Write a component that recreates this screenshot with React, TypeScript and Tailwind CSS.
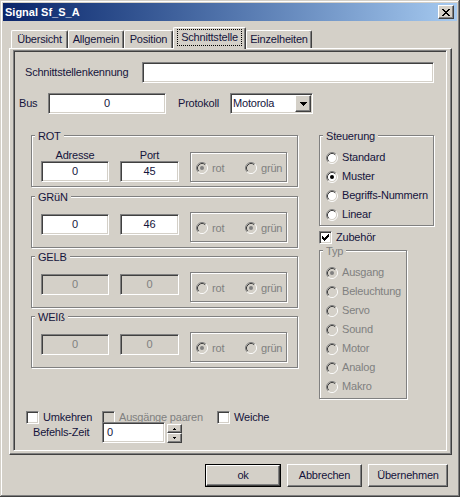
import React from "react";

const sunken =
  "border border-t-[#808080] border-l-[#808080] border-r-white border-b-white shadow-[inset_1px_1px_0_#404040,inset_-1px_-1px_0_#d4d0c8]";
const raised =
  "border border-t-white border-l-white border-r-[#404040] border-b-[#404040] shadow-[inset_-1px_-1px_0_#808080]";
const etched =
  "border border-[#808080] shadow-[inset_1px_1px_0_#ffffff,1px_1px_0_#ffffff]";

function Radio({ checked = false, disabled = false }: { checked?: boolean; disabled?: boolean }) {
  return (
    <svg width="12" height="12" viewBox="0 0 12 12" className="shrink-0">
      <circle cx="6" cy="6" r="4.5" fill={disabled ? "#d4d0c8" : "#ffffff"} />
      <path d="M2.11 9.89A5.5 5.5 0 0 1 9.89 2.11" stroke="#808080" fill="none" />
      <path d="M9.89 2.11A5.5 5.5 0 0 1 2.11 9.89" stroke="#ffffff" fill="none" />
      <path d="M2.82 9.18A4.5 4.5 0 0 1 9.18 2.82" stroke="#404040" fill="none" />
      <path d="M9.18 2.82A4.5 4.5 0 0 1 2.82 9.18" stroke="#d4d0c8" fill="none" />
      {checked && <circle cx="6" cy="6" r="2" fill={disabled ? "#808080" : "#000000"} />}
    </svg>
  );
}

function Check({ checked = false, disabled = false }: { checked?: boolean; disabled?: boolean }) {
  return (
    <span
      className={`${sunken} w-[13px] h-[13px] shrink-0 flex items-center justify-center ${
        disabled ? "bg-[#d4d0c8]" : "bg-white"
      }`}
    >
      {checked && (
        <svg width="7" height="7" viewBox="0 0 7 7" shapeRendering="crispEdges">
          <path
            d="M6 0h1v1H6zM5 1h2v1H5zM0 2h1v1H0zM4 2h3v1H4zM0 3h2v1H0zM3 3h3v1H3zM0 4h5v1H0zM1 5h3v1H1zM2 6h1v1H2z"
            fill="#000"
          />
        </svg>
      )}
    </span>
  );
}

function Edit({
  value = "",
  center = false,
  disabled = false,
  className = "",
}: {
  value?: string;
  center?: boolean;
  disabled?: boolean;
  className?: string;
}) {
  return (
    <div
      className={`${sunken} h-[21px] flex items-center ${
        disabled ? "bg-[#d4d0c8] text-[#808080]" : "bg-white"
      } ${center ? "justify-center" : "pl-[4px]"} ${className}`}
    >
      {value}
    </div>
  );
}

function Group({
  label,
  disabled = false,
  className = "",
  children,
}: {
  label: string;
  disabled?: boolean;
  className?: string;
  children?: React.ReactNode;
}) {
  return (
    <div className={`relative ${etched} ${className}`}>
      <span
        className={`absolute left-[3px] top-[-6px] px-[3px] h-[13px] bg-[#d4d0c8] ${
          disabled ? "text-[#808080]" : ""
        }`}
      >
        {label}
      </span>
      {children}
    </div>
  );
}

function RotGruen({ sel }: { sel: "rot" | "gruen" }) {
  return (
    <div className={`${etched} w-[97px] h-[30px] flex items-center pl-[5px] pt-[2px] text-[#808080]`}>
      <div className="w-[49px] flex items-center gap-[4px]">
        <Radio checked={sel === "rot"} disabled />
        <span>rot</span>
      </div>
      <div className="flex items-center gap-[4px]">
        <Radio checked={sel === "gruen"} disabled />
        <span>grün</span>
      </div>
    </div>
  );
}

function ColorGroup({
  label,
  adr,
  port,
  sel,
  disabled = false,
  labels = false,
  className = "",
}: {
  label: string;
  adr: string;
  port: string;
  sel: "rot" | "gruen";
  disabled?: boolean;
  labels?: boolean;
  className?: string;
}) {
  return (
    <Group label={label} className={`w-[267px] h-[52px] shrink-0 ${className}`}>
      <div className="flex items-start pl-[9px]">
        <div className={`flex flex-col items-center w-[68px] ${labels ? "mt-[13px]" : "mt-[17px]"}`}>
          {labels && <div className="h-[12px] leading-[12px]">Adresse</div>}
          <Edit className="w-[68px]" value={adr} center disabled={disabled} />
        </div>
        <div className={`ml-[11px] flex flex-col items-center w-[59px] ${labels ? "mt-[13px]" : "mt-[17px]"}`}>
          {labels && <div className="h-[12px] leading-[12px]">Port</div>}
          <Edit className="w-[59px]" value={port} center disabled={disabled} />
        </div>
        <div className={`ml-[11px] ${labels ? "mt-[16px]" : "mt-[15px]"}`}>
          <RotGruen sel={sel} />
        </div>
      </div>
    </Group>
  );
}

function Tab({ label, w }: { label: string; w: string }) {
  return (
    <div
      className={`${w} h-[18px] flex items-center justify-center border-l border-t border-white border-r border-r-[#404040] shadow-[inset_-1px_0_0_#808080] rounded-t-[2px]`}
    >
      {label}
    </div>
  );
}

function Button({ label, w, def = false }: { label: string; w: string; def?: boolean }) {
  if (def) {
    return (
      <div className={`${w} h-[23px] border border-black flex`}>
        <div className={`${raised} flex-1 flex items-center justify-center`}>{label}</div>
      </div>
    );
  }
  return <div className={`${raised} ${w} h-[23px] flex items-center justify-center`}>{label}</div>;
}

export default function App() {
  const steuerung = ["Standard", "Muster", "Begriffs-Nummern", "Linear"];
  const typ = ["Ausgang", "Beleuchtung", "Servo", "Sound", "Motor", "Analog", "Makro"];
  return (
    <div className="w-[460px] h-[497px] bg-[#d4d0c8] p-[3px] flex flex-col text-[11px] leading-[13px] tracking-[-0.2px] text-[#14143c] [font-family:'Liberation_Sans',Arial,sans-serif] shadow-[inset_-1px_-1px_0_#404040,inset_1px_1px_0_#d4d0c8,inset_-2px_-2px_0_#808080,inset_2px_2px_0_#ffffff] overflow-hidden">
      {/* Title bar */}
      <div className="h-[18px] shrink-0 flex items-center justify-between bg-linear-to-r from-[#0a246a] to-[#a6caf0] pl-[2px] pr-[3px]">
        <span className="text-white font-bold tracking-normal">Signal Sf_S_A</span>
        <div className={`${raised} w-[16px] h-[14px] flex items-center justify-center bg-[#d4d0c8]`}>
          <svg width="8" height="7" viewBox="0 0 8 7" shapeRendering="crispEdges">
            <path
              d="M0 0h2v1H0zM6 0h2v1H6zM1 1h2v1H1zM5 1h2v1H5zM2 2h4v1H2zM3 3h2v1H3zM2 4h4v1H2zM1 5h2v1H1zM5 5h2v1H5zM0 6h2v1H0zM6 6h2v1H6z"
              fill="#000"
            />
          </svg>
        </div>
      </div>

      {/* Tabs */}
      <div className="mt-[6px] h-[21px] shrink-0 flex items-end pl-[8px]">
        <Tab label="Übersicht" w="w-[57px]" />
        <Tab label="Allgemein" w="w-[56px]" />
        <Tab label="Position" w="w-[49px]" />
        <div className="relative z-10 w-[73px] h-[22px] mb-[-1px] flex items-start justify-center pt-[1px] bg-[#d4d0c8] border-l border-t border-white border-r border-r-[#404040] shadow-[inset_-1px_0_0_#808080] rounded-t-[2px]">
          <span className="h-[17px] leading-[15px] px-[3px] border border-dotted border-black">Schnittstelle</span>
        </div>
        <Tab label="Einzelheiten" w="w-[66px]" />
      </div>

      {/* Panel */}
      <div className="ml-[6px] w-[443px] h-[407px] shrink-0 border border-t-white border-l-white border-r-[#404040] border-b-[#404040] shadow-[inset_-1px_-1px_0_#808080]">
        <div className={`${sunken} mt-[1px] ml-[3px] w-[434px] h-[401px] p-px flex flex-col`}>
          {/* Row 1 */}
          <div className="mt-[10px] h-[21px] flex items-center">
            <div className="w-[127px] pl-[10px]">Schnittstellenkennung</div>
            <Edit className="w-[292px]" />
          </div>
          {/* Row 2 */}
          <div className="mt-[10px] h-[21px] flex items-center">
            <div className="w-[33px] pl-[4px]">Bus</div>
            <Edit className="w-[118px]" value="0" center />
            <div className="w-[64px] pl-[12px]">Protokoll</div>
            <div className={`${sunken} w-[83px] h-[21px] bg-white flex items-center pr-[1px]`}>
              <span className="flex-1 pl-[2px]">Motorola</span>
              <div className={`${raised} w-[16px] h-[17px] bg-[#d4d0c8] flex items-center justify-center`}>
                <svg width="7" height="4" viewBox="0 0 7 4" shapeRendering="crispEdges">
                  <path d="M0 0h7v1H0zM1 1h5v1H1zM2 2h3v1H2zM3 3h1v1H3z" fill="#000" />
                </svg>
              </div>
            </div>
          </div>

          {/* Main area */}
          <div className="mt-[21px] flex items-start pl-[16px]">
            <div className="flex flex-col w-[267px]">
              <ColorGroup label="ROT" adr="0" port="45" sel="rot" labels />
              <ColorGroup label="GRüN" adr="0" port="46" sel="gruen" className="mt-[9px]" />
              <ColorGroup label="GELB" adr="0" port="0" sel="gruen" disabled className="mt-[8px]" />
              <ColorGroup label="WEIß" adr="0" port="0" sel="rot" disabled className="mt-[8px]" />
            </div>
            <div className="ml-[21px] flex flex-col">
              <Group label="Steuerung" className="w-[115px] h-[91px]">
                <div className="pt-[12px] pl-[6px] flex flex-col">
                  {steuerung.map((t, i) => (
                    <div key={t} className="h-[19px] flex items-center gap-[4px] whitespace-nowrap">
                      <Radio checked={i === 1} />
                      <span>{t}</span>
                    </div>
                  ))}
                </div>
              </Group>
              <div className="mt-[4px] h-[14px] flex items-center gap-[4px]">
                <Check checked />
                <span>Zubehör</span>
              </div>
              <Group label="Typ" disabled className="mt-[6px] w-[88px] h-[149px]">
                <div className="pt-[12px] pl-[6px] flex flex-col text-[#808080]">
                  {typ.map((t, i) => (
                    <div key={t} className="h-[19px] flex items-center gap-[4px] whitespace-nowrap">
                      <Radio checked={i === 0} disabled />
                      <span>{t}</span>
                    </div>
                  ))}
                </div>
              </Group>
            </div>
          </div>

          {/* Bottom checks */}
          <div className="mt-[12px] h-[13px] flex items-center pl-[11px]">
            <div className="w-[76px] flex items-center gap-[4px]">
              <Check />
              <span>Umkehren</span>
            </div>
            <div className="w-[115px] flex items-center gap-[4px] text-[#808080]">
              <Check disabled />
              <span>Ausgänge paaren</span>
            </div>
            <div className="flex items-center gap-[4px]">
              <Check />
              <span>Weiche</span>
            </div>
          </div>
          <div className="mt-[-2px] h-[21px] flex items-start pl-[18px]">
            <div className="w-[69px] h-[21px] flex items-center">Befehls-Zeit</div>
            <Edit className="w-[63px]" value="0" />
            <div className="ml-[2px] mt-[2px] flex flex-col">
              <div className={`${raised} w-[15px] h-[9px] flex items-center justify-center`}>
                <svg width="3" height="2" viewBox="0 0 3 2" shapeRendering="crispEdges">
                  <path d="M1 0h1v1H1zM0 1h3v1H0z" fill="#000" />
                </svg>
              </div>
              <div className={`${raised} w-[15px] h-[10px] flex items-center justify-center`}>
                <svg width="3" height="2" viewBox="0 0 3 2" shapeRendering="crispEdges">
                  <path d="M0 0h3v1H0zM1 1h1v1H1z" fill="#000" />
                </svg>
              </div>
            </div>
          </div>
        </div>
      </div>

      {/* Buttons */}
      <div className="mt-[9px] flex justify-end gap-[6px] pr-[9px]">
        <Button label="ok" w="w-[76px]" def />
        <Button label="Abbrechen" w="w-[75px]" />
        <Button label="Übernehmen" w="w-[80px]" />
      </div>
    </div>
  );
}
